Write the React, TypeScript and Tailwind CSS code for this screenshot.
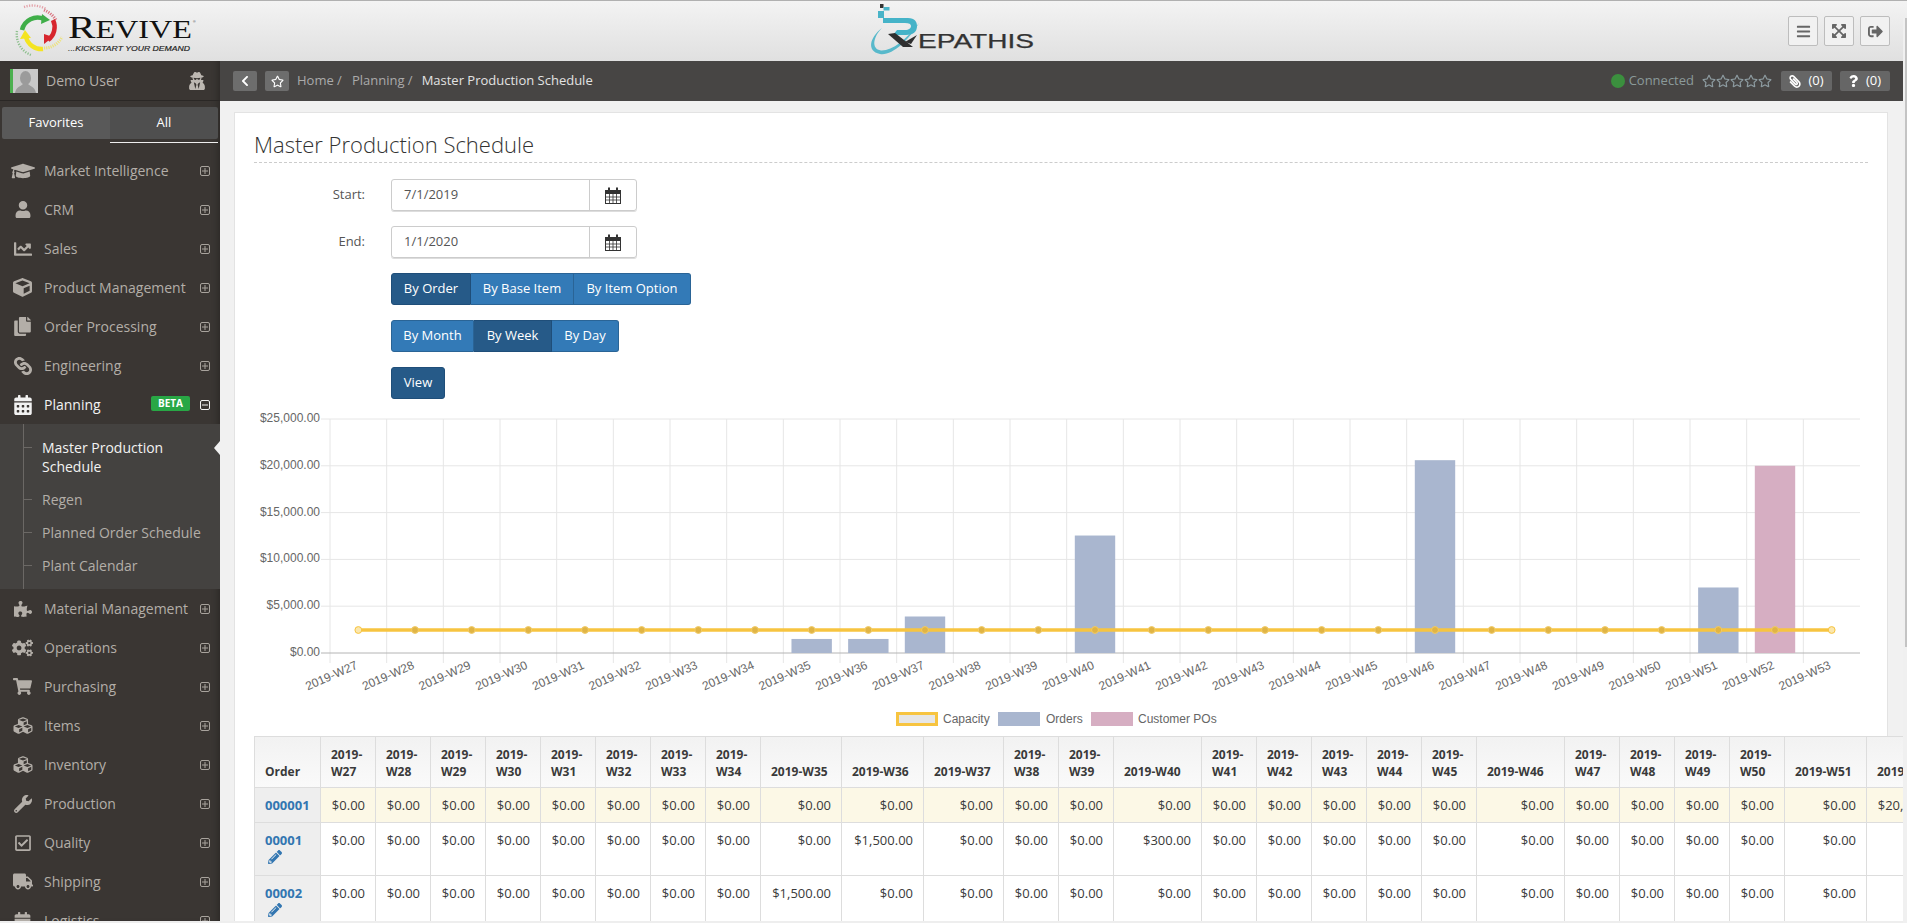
import type { ReactNode } from "react";
import {
  FaBars,
  FaCalendarAlt,
  FaChartLine,
  FaChevronLeft,
  FaCogs,
  FaCopy,
  FaCube,
  FaCubes,
  FaExpandArrowsAlt,
  FaGraduationCap,
  FaLink,
  FaPaperclip,
  FaPencilAlt,
  FaPuzzlePiece,
  FaQuestion,
  FaRegCheckSquare,
  FaRegStar,
  FaShoppingCart,
  FaSignOutAlt,
  FaTruck,
  FaUser,
  FaUserSecret,
  FaWrench,
} from "react-icons/fa";

const menuTop = [
  { label: "Market Intelligence", icon: <FaGraduationCap className="h-[20px] w-[24px]" /> },
  { label: "CRM", icon: <FaUser className="h-[17px] w-[16px]" /> },
  { label: "Sales", icon: <FaChartLine className="h-[18px] w-[22px]" /> },
  { label: "Product Management", icon: <FaCube className="h-[19px] w-[19px]" /> },
  { label: "Order Processing", icon: <FaCopy className="h-[19px] w-[19px]" /> },
  { label: "Engineering", icon: <FaLink className="h-[18px] w-[18px] rotate-90" /> },
];

const menuBottom = [
  { label: "Material Management", icon: <FaPuzzlePiece className="h-[18px] w-[18px]" /> },
  { label: "Operations", icon: <FaCogs className="h-[18px] w-[21px]" /> },
  { label: "Purchasing", icon: <FaShoppingCart className="h-[17px] w-[19px]" /> },
  { label: "Items", icon: <FaCubes className="h-[19px] w-[24px]" /> },
  { label: "Inventory", icon: <FaCubes className="h-[19px] w-[24px]" /> },
  { label: "Production", icon: <FaWrench className="h-[18px] w-[18px]" /> },
  { label: "Quality", icon: <FaRegCheckSquare className="h-[18px] w-[18px]" /> },
  { label: "Shipping", icon: <FaTruck className="h-[17px] w-[20px]" /> },
  { label: "Logistics", icon: <FaCalendarAlt className="h-[18px] w-[17px]" /> },
];

const subMenu = ["Regen", "Planned Order Schedule", "Plant Calendar"];

const weeks = Array.from({ length: 27 }, (_, i) => `2019-W${i + 27}`);

const colWidths = [
  55, 55, 55, 55, 55, 55, 55, 55, 81, 82, 80, 55, 55, 88, 55, 55, 55, 55, 55, 88, 55, 55, 55, 55, 82, 88, 55,
];

const rows = [
  { id: "000001", edit: false, total: true, values: { "2019-W52": "$20,000.00" } as Record<string, string> },
  { id: "00001", edit: true, total: false, values: { "2019-W36": "$1,500.00", "2019-W40": "$300.00" } as Record<string, string> },
  { id: "00002", edit: true, total: false, values: { "2019-W35": "$1,500.00" } as Record<string, string> },
];

const bars = [
  { week: 8, value: 1500, color: "#a9b6cf" },
  { week: 9, value: 1500, color: "#a9b6cf" },
  { week: 10, value: 3900, color: "#a9b6cf" },
  { week: 13, value: 12550, color: "#a9b6cf" },
  { week: 19, value: 20600, color: "#a9b6cf" },
  { week: 24, value: 7000, color: "#a9b6cf" },
  { week: 25, value: 20000, color: "#d6aec2" },
];

function PlusBox({ minus }: { minus?: boolean }) {
  return (
    <svg viewBox="0 0 10 10" className="h-[10px] w-[10px]" fill="none" stroke="currentColor" strokeWidth="1">
      <rect x="0.5" y="0.5" width="9" height="9" rx="1.5" />
      <path d="M2 5h6" />
      {!minus && <path d="M5 2v6" />}
    </svg>
  );
}

function MenuRow({ label, icon }: { label: string; icon: ReactNode }) {
  return (
    <div className="flex h-[39px] items-center text-[#b3aea8]">
      <div className="flex w-[44px] shrink-0 justify-center pl-[1px]">{icon}</div>
      <span className="text-[14px]">{label}</span>
      <span className="mr-[10px] ml-auto text-[#a8a39d]">
        <PlusBox />
      </span>
    </div>
  );
}

function CalendarGlyph() {
  return (
    <svg viewBox="0 0 16 17" className="h-[17px] w-[16px]" fill="#333">
      <path d="M0 3h16v14H0zM1 7v9h14V7z" fillRule="evenodd" />
      <rect x="3" y="0.5" width="2" height="4" />
      <rect x="11" y="0.5" width="2" height="4" />
      <path d="M1 10h14M1 13h14M4.5 7v9M8 7v9M11.5 7v9" stroke="#333" strokeWidth="0.8" />
    </svg>
  );
}

function ReviveLogo() {
  return (
    <svg viewBox="0 0 220 60" className="h-[60px] w-[220px] shrink-0">
      <path d="M44 9 A25 25 0 0 1 56 19" fill="none" stroke="#d9737f" strokeWidth="3" strokeDasharray="1.2 1.2" />
      <path d="M24 6 A27 27 0 0 1 46 8" fill="none" stroke="#e3a1a8" strokeWidth="2.4" strokeDasharray="1.2 1.4" />
      <path d="M17 30 A22 22 0 0 0 31 54" fill="none" stroke="#8cbf8c" strokeWidth="2.4" strokeDasharray="1.2 1.4" />
      <path d="M44 47 A20 20 0 0 0 62 36" fill="none" stroke="#ece27e" strokeWidth="3" strokeDasharray="1.2 1" />
      <path d="M22 29 A16 16 0 0 1 44 18" fill="none" stroke="#3fae49" strokeWidth="4.5" />
      <path d="M42 13 L50 19 L41 23Z" fill="#3fae49" />
      <path d="M53 19 A16 16 0 0 1 48 39" fill="none" stroke="#d7262e" strokeWidth="4.5" />
      <path d="M53 36 L44 43 L44 33Z" fill="#d7262e" />
      <path d="M43 48 A16 16 0 0 1 26 36" fill="none" stroke="#f4e421" strokeWidth="4.5" />
      <path d="M20 38 L25 29 L31 37Z" fill="#f4e421" />
      <text x="68" y="37" fontFamily="'Liberation Serif', serif" fill="#111" textLength="124" lengthAdjust="spacingAndGlyphs">
        <tspan fontSize="32">R</tspan>
        <tspan fontSize="25">EVIVE</tspan>
      </text>
      <text x="193" y="22" fontFamily="'Liberation Sans', sans-serif" fontSize="3.5" fill="#333">®</text>
      <text x="68" y="50" fontFamily="'Liberation Sans', sans-serif" fontSize="6.5" fontStyle="italic" fill="#222" stroke="#222" strokeWidth="0.15" textLength="122" lengthAdjust="spacingAndGlyphs">
        ...KICKSTART YOUR DEMAND
      </text>
    </svg>
  );
}

function RepathisLogo() {
  return (
    <svg viewBox="860 0 180 60" className="h-[60px] w-[180px] shrink-0">
      <rect x="880" y="3" width="3.5" height="4" fill="#333" />
      <rect x="883.5" y="6" width="6" height="3.5" fill="#49b4c8" />
      <rect x="878" y="10" width="6" height="7" fill="#49b4c8" />
      <path d="M882 27 C870 36 866 50 880 53 C892 55 908 40 919 22 C906 39 892 50 881 49.5 C871 48 873 36 882 27Z" fill="#58b9cb" />
      <path d="M883 17 H908 C915 17 917 21 917 25 C917 31 913 34 906 34 L893 34 L897 29 L905 29 C909 29 911 27 911 25 C911 23 909 22 905 22 H883 Z" fill="#45b3c8" />
      <path d="M888 33 L895 32 L913 46 L903 46 Z" fill="#2f2f2f" />
      <path d="M905 41 L917 34 L911 43 Z" fill="#2f2f2f" />
      <text x="918" y="47" fontFamily="'Liberation Sans', sans-serif" fontSize="21" fill="#333" stroke="#333" strokeWidth="0.25" textLength="116" lengthAdjust="spacingAndGlyphs">
        EPATHIS
      </text>
    </svg>
  );
}

function HeaderButton({ children }: { children: ReactNode }) {
  return (
    <button className="flex h-[30px] w-[30px] items-center justify-center rounded-[2px] border border-[#bdbdbd] bg-[#f1f1f1] text-[#666]">
      {children}
    </button>
  );
}

function Chart() {
  const plotLeft = 330;
  const step = 1530 / 27;
  const zero = 653;
  const perUnit = 234 / 25000;
  const yTicks = [25000, 20000, 15000, 10000, 5000];
  const center = (i: number) => plotLeft + (i + 0.5) * step;

  return (
    <svg viewBox="254 405 1615 330" className="mt-[6px] mb-[1px] block h-[330px] w-[1615px]">
      <g stroke="#e6e6e6" strokeWidth="1">
        {weeks.map((w, i) => (
          <line key={w} x1={plotLeft + i * step} x2={plotLeft + i * step} y1="419" y2={zero + 10} />
        ))}
        {yTicks.map((t) => (
          <line key={t} x1="321" x2="1860" y1={zero - t * perUnit} y2={zero - t * perUnit} />
        ))}
      </g>
      <line x1="321" x2="1860" y1={zero} y2={zero} stroke="#b4b4b4" />
      {[...yTicks, 0].map((t) => (
        <text key={t} x="320" y={zero - t * perUnit + 3} textAnchor="end" fontFamily="'Liberation Sans', sans-serif" fontSize="12" fill="#666">
          ${t.toLocaleString("en-US")}.00
        </text>
      ))}
      {bars.map((b) => (
        <rect key={b.week} x={center(b.week) - 20.2} width="40.4" y={zero - b.value * perUnit} height={b.value * perUnit} fill={b.color} />
      ))}
      <line x1={center(0)} x2={center(26)} y1="630" y2="630" stroke="#f7c440" strokeWidth="3.5" />
      {weeks.map((w, i) => {
        const end = i === 0 || i === 26;
        return <circle key={w} cx={center(i)} cy="630" r="3.4" fill={end ? "#fbe7ad" : "#e0b445"} stroke={end ? "#f7c440" : "#f2cb66"} strokeWidth="1" />;
      })}
      {weeks.map((w, i) => (
        <text key={w} x={center(i)} y="668" textAnchor="end" transform={`rotate(-24 ${center(i)} 668)`} fontFamily="'Liberation Sans', sans-serif" fontSize="12" fill="#666">
          {w}
        </text>
      ))}
      <rect x="897.5" y="713.5" width="39" height="11" fill="#e6e6e6" stroke="#f7c440" strokeWidth="3" />
      <rect x="998" y="712" width="42" height="14" fill="#a9b6cf" />
      <rect x="1091" y="712" width="42" height="14" fill="#d6aec2" />
      <g fontFamily="'Liberation Sans', sans-serif" fontSize="12" fill="#666">
        <text x="943" y="723">Capacity</text>
        <text x="1046" y="723">Orders</text>
        <text x="1138" y="723">Customer POs</text>
      </g>
    </svg>
  );
}

function ScheduleTable() {
  return (
    <table className="w-[1700px] table-fixed border-collapse text-[13px] text-[#3a3a3a]">
      <colgroup>
        <col className="w-[66px]" />
        {colWidths.map((w, i) => (
          <col key={i} style={{ width: w }} />
        ))}
      </colgroup>
      <thead>
        <tr className="h-[51px] bg-gradient-to-b from-[#f2f2f2] to-[#fafafa]">
          <th className="border border-[#ddd] px-[10px] pb-[7px] text-left align-bottom text-[12px] leading-[17px] font-bold">Order</th>
          {weeks.map((w) => (
            <th key={w} className="border border-[#ddd] px-[10px] pb-[7px] text-left align-bottom text-[12px] leading-[17px] font-bold">
              {w}
            </th>
          ))}
        </tr>
      </thead>
      <tbody>
        {rows.map((row) => (
          <tr key={row.id} className={row.total ? "h-[35px] bg-[#fcf8e6]" : "h-[53px] bg-white"}>
            <td className="border border-[#ddd] bg-[#eeeeee] px-[10px] py-[8px] align-top leading-[18px] font-bold text-[#3276b1]">
              <div>{row.id}</div>
              {row.edit && <FaPencilAlt className="mt-[1px] ml-[3px] h-[14px] w-[14px]" />}
            </td>
            {weeks.map((w) => (
              <td key={w} className="overflow-hidden border border-[#ddd] px-[10px] py-[8px] text-right align-top leading-[18px] whitespace-nowrap">
                {row.values[w] ?? "$0.00"}
              </td>
            ))}
          </tr>
        ))}
      </tbody>
    </table>
  );
}

function DateField({ label, value }: { label: string; value: string }) {
  return (
    <div className="flex items-center">
      <label className="w-[111px] text-right text-[13px] text-[#555]">{label}</label>
      <div className="ml-[26px] flex h-[32px] w-[246px] rounded-[3px] border border-[#ccc] shadow-[0_1px_0_#ddd]">
        <div className="flex flex-1 items-center pl-[12px] text-[13px] text-[#555]">{value}</div>
        <div className="flex w-[47px] items-center justify-center border-l border-[#ccc]">
          <CalendarGlyph />
        </div>
      </div>
    </div>
  );
}

function BtnGroup({ items, active, widths }: { items: string[]; active: string; widths: string[] }) {
  return (
    <div className="ml-[137px] flex">
      {items.map((item, i) => (
        <button
          key={item}
          className={`h-[32px] border-y border-r text-[13px] text-white first:rounded-l-[3px] first:border-l last:rounded-r-[3px] ${widths[i]} ${
            item === active ? "border-[#1f4e79] bg-[#265a88]" : "border-[#2a6496] bg-[#337ab7]"
          }`}
        >
          {item}
        </button>
      ))}
    </div>
  );
}

export default function App() {
  return (
    <div className="relative h-screen w-full overflow-hidden bg-[#f1f1f1] font-['Open_Sans',sans-serif]">
      <header className="flex h-[61px] items-center border-t border-[#b0b0b0] bg-gradient-to-b from-[#f3f3f3] to-[#e0e0e0]">
        <ReviveLogo />
        <div className="ml-[640px]">
          <RepathisLogo />
        </div>
        <div className="mr-[17px] ml-auto flex gap-[6px]">
          <HeaderButton>
            <FaBars className="h-[15px] w-[15px]" />
          </HeaderButton>
          <HeaderButton>
            <FaExpandArrowsAlt className="h-[16px] w-[16px]" />
          </HeaderButton>
          <HeaderButton>
            <FaSignOutAlt className="h-[15px] w-[15px]" />
          </HeaderButton>
        </div>
      </header>

      <div className="flex h-[860px]">
        <aside className="w-[220px] shrink-0 overflow-hidden bg-[#3a3633] shadow-[inset_-6px_0_6px_-4px_rgba(0,0,0,0.25)]">
          <div className="flex h-[40px] items-center border-b border-[#2a2725] pl-[10px]">
            <div className="flex h-[24px] w-[28px] overflow-hidden border-l-[3px] border-[#4cb050] bg-[#c9c9c9]">
              <svg viewBox="0 0 25 24" className="h-[24px] w-[25px]" fill="#9b9b9b">
                <ellipse cx="12.5" cy="9" rx="5.5" ry="7" />
                <path d="M2 24c1-6 6-7 8-9h5c2 2 7 3 8 9z" />
              </svg>
            </div>
            <span className="ml-[8px] text-[14px] text-[#b5b0aa]">Demo User</span>
            <FaUserSecret className="mr-[15px] ml-auto h-[18px] w-[16px] text-[#bdb8b2]" />
          </div>

          <div className="mx-[2px] mt-[6px] flex h-[36px] text-[13px] text-white">
            <div className="flex h-[32px] w-[108px] items-center justify-center rounded-l-[2px] bg-[#595959]">Favorites</div>
            <div className="flex h-[36px] w-[108px] items-start border-b border-[#eee]">
              <div className="flex h-[32px] w-full items-center justify-center rounded-r-[2px] bg-[#4f4f4f]">All</div>
            </div>
          </div>

          <nav className="mt-[8px]">
            {menuTop.map((m) => (
              <MenuRow key={m.label} label={m.label} icon={m.icon} />
            ))}
            <div className="flex h-[39px] items-center text-[#f2f2f2]">
              <div className="flex w-[44px] shrink-0 justify-center pl-[1px]">
                <FaCalendarAlt className="h-[20px] w-[18px]" />
              </div>
              <span className="text-[14px] font-medium">Planning</span>
              <span className="mt-[-3px] mr-[10px] ml-auto w-[39px] rounded-[2px] bg-[#28a745] text-center text-[10px] leading-[15px] font-bold text-white">BETA</span>
              <span className="mr-[10px]">
                <PlusBox minus />
              </span>
            </div>
            <div className="relative h-[165px] bg-[#444240]">
              <div className="absolute top-[17px] right-0 h-0 w-0 border-y-[7px] border-r-[6px] border-y-transparent border-r-[#f1f1f1]" />
              <ul className="ml-[23px] h-full border-l border-[#6b6865] pt-[7px] text-[14px] leading-[19px]">
                <li className="flex py-[7px]">
                  <span className="mt-[9px] mr-[10px] h-px w-[8px] shrink-0 bg-[#6b6865]" />
                  <span className="font-medium text-[#f2f2f2]">
                    Master Production
                    <br />
                    Schedule
                  </span>
                </li>
                {subMenu.map((s) => (
                  <li key={s} className="flex items-center py-[7px] text-[#b3aea8]">
                    <span className="mr-[10px] h-px w-[8px] shrink-0 bg-[#6b6865]" />
                    <span className="whitespace-nowrap">{s}</span>
                  </li>
                ))}
              </ul>
            </div>
            {menuBottom.map((m) => (
              <MenuRow key={m.label} label={m.label} icon={m.icon} />
            ))}
          </nav>
        </aside>

        <main className="w-[1683px] shrink-0 overflow-hidden">
          <div className="flex h-[40px] items-center bg-[#474544] px-[13px] text-[13px]">
            <button className="flex h-[20px] w-[24px] items-center justify-center rounded-[2px] bg-[#6d6d6d] text-white">
              <FaChevronLeft className="h-[12px] w-[12px]" />
            </button>
            <button className="ml-[8px] flex h-[20px] w-[24px] items-center justify-center rounded-[2px] bg-[#6d6d6d] text-white">
              <FaRegStar className="h-[13px] w-[13px]" />
            </button>
            <span className="ml-[8px] text-[#aaa]">Home /</span>
            <span className="ml-[10px] text-[#aaa]">Planning /</span>
            <span className="ml-[9px] text-[#e2e2e2]">Master Production Schedule</span>
            <span className="ml-auto h-[14px] w-[14px] rounded-full bg-[#3b8f3e]" />
            <span className="ml-[4px] text-[#8b9a9a]">Connected</span>
            <span className="mr-[9px] ml-[8px] flex text-[#8d9ba0]">
              {[0, 1, 2, 3, 4].map((i) => (
                <FaRegStar key={i} className="h-[14px] w-[14px]" />
              ))}
            </span>
            <button className="flex h-[20px] w-[51px] items-center justify-center gap-[7px] rounded-[2px] bg-[#666] text-[13px] text-white">
              <FaPaperclip className="h-[13px] w-[12px] -scale-x-100" />
              (0)
            </button>
            <button className="ml-[8px] flex h-[20px] w-[50px] items-center justify-center gap-[8px] rounded-[2px] bg-[#666] text-[13px] text-white">
              <FaQuestion className="h-[12px] w-[9px]" />
              (0)
            </button>
          </div>

          <div className="mt-[11px] ml-[14px] h-[900px] w-[1654px] border border-[#e3e3e3] bg-white px-[19px]">
            <h1 className="flex h-[50px] items-end border-b border-dashed border-[#ccc] pb-[2px] text-[22px] leading-[32px] font-light text-[#333]">
              Master Production Schedule
            </h1>
            <div className="mt-[16px] flex flex-col gap-[15px]">
              <DateField label="Start:" value="7/1/2019" />
              <DateField label="End:" value="1/1/2020" />
              <BtnGroup items={["By Order", "By Base Item", "By Item Option"]} active="By Order" widths={["w-[80px]", "w-[103px]", "w-[117px]"]} />
              <BtnGroup items={["By Month", "By Week", "By Day"]} active="By Week" widths={["w-[83px]", "w-[78px]", "w-[67px]"]} />
              <button className="ml-[137px] h-[32px] w-[54px] rounded-[3px] border border-[#1f4e79] bg-[#265a88] text-[13px] text-white">View</button>
            </div>
            <Chart />
            <ScheduleTable />
          </div>
        </main>
      </div>

      <div className="h-[2px] bg-[#eee]" />
      <div className="absolute top-[18px] right-0 bottom-0 w-[4px] bg-[#f0f0f0]">
        <div className="ml-[2px] h-[629px] w-[2px] bg-[#c4c4c4]" />
      </div>
    </div>
  );
}
